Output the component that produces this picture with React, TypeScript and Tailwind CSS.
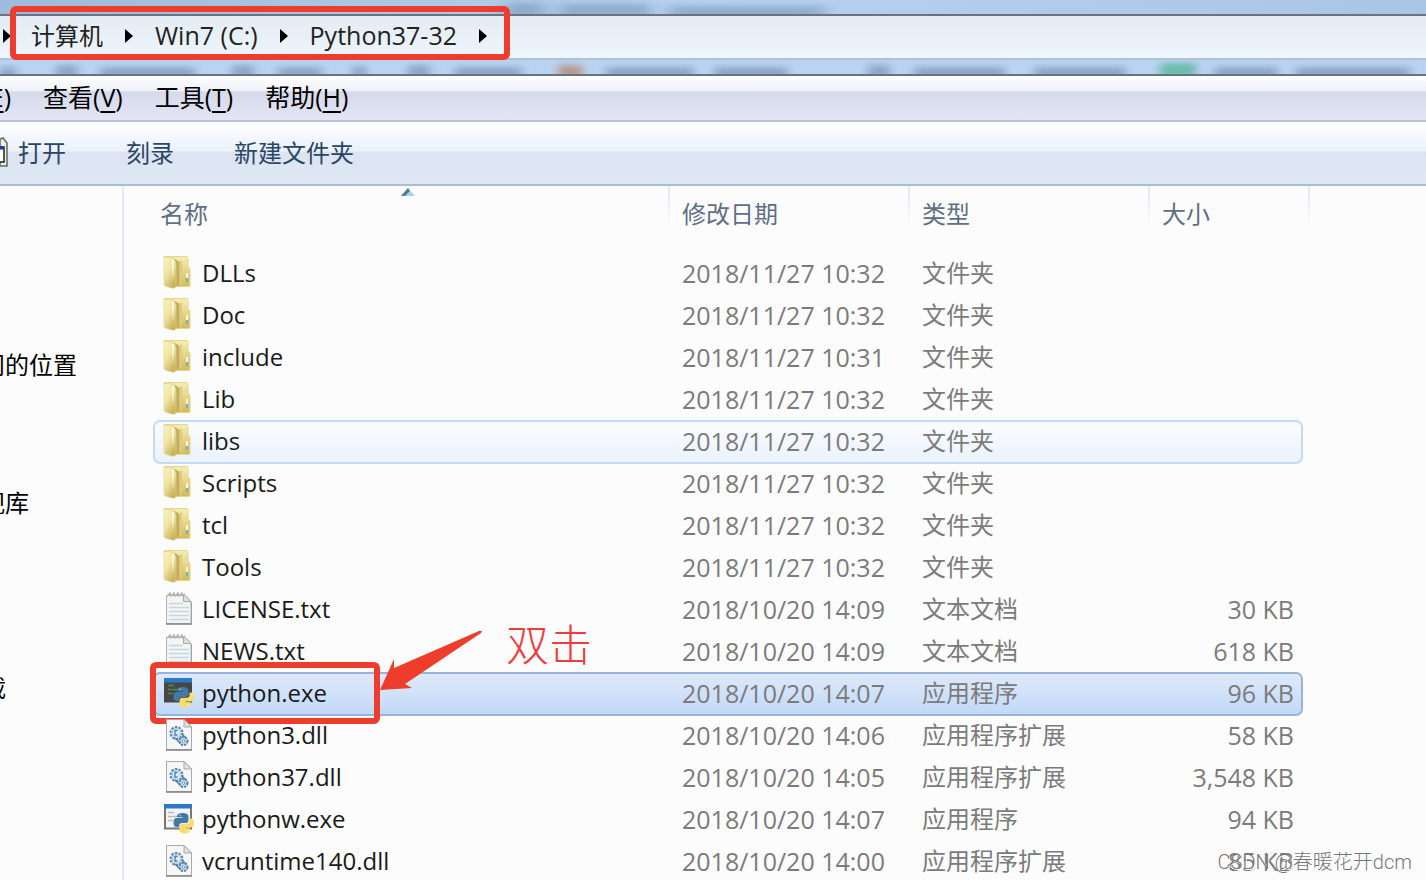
import { useState } from "react";

type Kind = "folder" | "text" | "console" | "window" | "dll";

interface FileRow {
    name: string;
    date: string;
    type: string;
    size: string;
    kind: Kind;
}

const files: FileRow[] = [
    { name: "DLLs", date: "2018/11/27 10:32", type: "文件夹", size: "", kind: "folder" },
    { name: "Doc", date: "2018/11/27 10:32", type: "文件夹", size: "", kind: "folder" },
    { name: "include", date: "2018/11/27 10:31", type: "文件夹", size: "", kind: "folder" },
    { name: "Lib", date: "2018/11/27 10:32", type: "文件夹", size: "", kind: "folder" },
    { name: "libs", date: "2018/11/27 10:32", type: "文件夹", size: "", kind: "folder" },
    { name: "Scripts", date: "2018/11/27 10:32", type: "文件夹", size: "", kind: "folder" },
    { name: "tcl", date: "2018/11/27 10:32", type: "文件夹", size: "", kind: "folder" },
    { name: "Tools", date: "2018/11/27 10:32", type: "文件夹", size: "", kind: "folder" },
    { name: "LICENSE.txt", date: "2018/10/20 14:09", type: "文本文档", size: "30 KB", kind: "text" },
    { name: "NEWS.txt", date: "2018/10/20 14:09", type: "文本文档", size: "618 KB", kind: "text" },
    { name: "python.exe", date: "2018/10/20 14:07", type: "应用程序", size: "96 KB", kind: "console" },
    { name: "python3.dll", date: "2018/10/20 14:06", type: "应用程序扩展", size: "58 KB", kind: "dll" },
    { name: "python37.dll", date: "2018/10/20 14:05", type: "应用程序扩展", size: "3,548 KB", kind: "dll" },
    { name: "pythonw.exe", date: "2018/10/20 14:07", type: "应用程序", size: "94 KB", kind: "window" },
    { name: "vcruntime140.dll", date: "2018/10/20 14:00", type: "应用程序扩展", size: "85 KB", kind: "dll" },
];

const columns = ["名称", "修改日期", "类型", "大小"];

function FolderIcon() {
    return (
        <svg viewBox="0 0 32 34" className="h-[34px] w-8 shrink-0" aria-hidden="true">
            <defs>
                <linearGradient id="folderBack" x1="0" y1="0" x2="0" y2="1">
                    <stop offset="0" stopColor="#f5eeb6" />
                    <stop offset="1" stopColor="#d6b955" />
                </linearGradient>
                <linearGradient id="folderFront" x1="0" y1="0" x2="0.6" y2="1">
                    <stop offset="0" stopColor="#faf4bd" />
                    <stop offset="0.5" stopColor="#efe5a4" />
                    <stop offset="1" stopColor="#cbb35b" />
                </linearGradient>
                <linearGradient id="folderShine" x1="0" y1="0" x2="0" y2="1">
                    <stop offset="0" stopColor="#fffef2" />
                    <stop offset="1" stopColor="#fffef2" stopOpacity="0" />
                </linearGradient>
            </defs>
            <path d="M2 1.5Q2 0.5 3 0.5H24.5Q26 0.5 26 2V11L28 13V29Q28 30.5 26 30.5H12V2H2Z" fill="url(#folderBack)" stroke="#e6d58c" />
            <path d="M13 3L17.5 6V28L14 31H12Z" fill="#c3ac5c" />
            <path d="M17.5 6L20 4V29L17.5 28Z" fill="#dccb80" />
            <path d="M2 1.5H6Q11 2 12.5 4L14 7V31L11.5 32.5L3 30Q2 29.5 2 28Z" fill="url(#folderFront)" stroke="#e2d389" strokeWidth="0.6" />
            <path d="M10 4H12V24H10Z" fill="url(#folderShine)" />
            <path d="M25 17V22" stroke="#f3f6ea" strokeWidth="2" />
            <path d="M25 22V26" stroke="#74b5b6" strokeWidth="2.4" />
        </svg>
    );
}

function TextIcon() {
    return (
        <svg viewBox="0 0 32 34" className="h-[34px] w-8 shrink-0" aria-hidden="true">
            <path d="M4.5 3.5H22L29 10V31.5H4.5Z" fill="#f3f4f4" stroke="#b3b3b3" />
            <path d="M4 32H30" stroke="#858585" strokeWidth="1.5" />
            <path d="M29.5 10V31" stroke="#a1a1a1" />
            <path d="M5 4L8 0.8L9 4L12 0.8L13 4L16 0.8L17 4L20 0.8L21 4L23 1.5" fill="none" stroke="#b4b4b4" strokeWidth="1.2" />
            <path d="M21.5 3V9.5H29L25 5Z" fill="#ddd" stroke="#a9a9a9" />
            <path d="M7 11.5H21M7 15.5H27M7 19.5H27M7 23.5H27M7 27.5H27" stroke="#c5d6e3" strokeWidth="1.6" />
        </svg>
    );
}

function PythonLogo() {
    return (
        <>
            <path d="M15 14.5Q15 11 20.5 11Q26.5 11 26.5 14.5V18Q26.5 21 23.5 21H20Q17 21 17 25H14.5Q11.5 25 11.5 20.5Q11.5 16 14.5 16H20.5V15.2H15Z" fill="#4379a8" />
            <path d="M27.5 16.5H29Q32 16.5 32 21Q32 25.5 29 25.5H23.5V26.3H28V28Q28 31.5 23 31.5Q17.5 31.5 17.5 28V25Q17.5 21.8 20.5 21.8H24.5Q27.5 21.8 27.5 19Z" fill="#f9dc6b" />
            <circle cx="18" cy="13.2" r="0.8" fill="#a9c6dc" />
            <circle cx="25.3" cy="29" r="0.8" fill="#fff3b8" />
        </>
    );
}

function ConsoleIcon() {
    return (
        <svg viewBox="0 0 32 34" className="h-[34px] w-8 shrink-0" aria-hidden="true">
            <path d="M2 4H30V26.5H2Z" fill="#474747" />
            <path d="M2 2H30V6.5H2Z" fill="#2e78c8" />
            <path d="M6 9.5H12M6 13.5H9M10 13.5H15M6 17.5H11" stroke="#4c8f40" strokeWidth="1.6" />
            <PythonLogo />
        </svg>
    );
}

function WindowIcon() {
    return (
        <svg viewBox="0 0 32 34" className="h-[34px] w-8 shrink-0" aria-hidden="true">
            <path d="M3 4H29V26.5H3Z" fill="#f4f4f4" stroke="#777" strokeWidth="2" />
            <path d="M2 2H30V6.5H2Z" fill="#2e78c8" />
            <path d="M6 10.5H12M6 14.5H16M6 18.5H11" stroke="#bcbcbc" strokeWidth="1.5" />
            <PythonLogo />
        </svg>
    );
}

function DllIcon() {
    return (
        <svg viewBox="0 0 32 34" className="h-[34px] w-8 shrink-0" aria-hidden="true">
            <path d="M4.5 1.5H22L29.5 9V31.5H4.5Z" fill="#f6f6f6" stroke="#a9a9a9" />
            <path d="M4 32H30" stroke="#858585" strokeWidth="1.5" />
            <path d="M22 1.5V9H29.5Z" fill="#e1e1e1" stroke="#a9a9a9" />
            <path d="M17 12L24 20L18 24L11 20Z" fill="#c4dbf0" />
            <circle cx="14.5" cy="15" r="6" fill="#dbeaf7" stroke="#5580ab" strokeWidth="2" strokeDasharray="2.4 1.3" />
            <circle cx="14.5" cy="15" r="4.2" fill="#dfedf8" stroke="#a5c2de" />
            <path d="M15.5 12.5H13V17H15.5" fill="none" stroke="#5580ab" strokeWidth="1.4" />
            <circle cx="21.5" cy="23" r="4" fill="#cfe2f3" stroke="#5580ab" strokeWidth="2" strokeDasharray="2.2 1.1" />
            <circle cx="21.5" cy="23" r="1.4" fill="#eef5fb" stroke="#6d95be" />
            <path d="M13 20L18.5 25.5M20 16L24 20" stroke="#5580ab" strokeWidth="1.4" />
        </svg>
    );
}

function FileIcon({ kind }: { kind: Kind }) {
    if (kind === "folder") return <FolderIcon />;
    if (kind === "text") return <TextIcon />;
    if (kind === "console") return <ConsoleIcon />;
    if (kind === "window") return <WindowIcon />;
    return <DllIcon />;
}

function CrumbArrow() {
    return (
        <svg viewBox="0 0 10 14" className="h-[14px] w-[10px] shrink-0" aria-hidden="true">
            <path d="M1 0L9 7L1 14Z" fill="#000" />
        </svg>
    );
}

// Blurred desktop content showing through the glass frame
function GlassSmudges() {
    return (
        <svg viewBox="0 0 1426 14" preserveAspectRatio="none" className="h-full w-full" aria-hidden="true">
            <defs>
                <filter id="smudge" x="-20%" y="-100%" width="140%" height="300%">
                    <feGaussianBlur stdDeviation="5 3" />
                </filter>
            </defs>
            <g filter="url(#smudge)" fill="#7d99b9" opacity="0.75">
                <path d="M0 7H16V19H0ZM56 5H78V19H56ZM100 7H195V19H100ZM232 5H254V19H232ZM278 7H322V19H278ZM352 6H366V19H352ZM408 5H430V19H408ZM455 7H522V19H455ZM606 7H694V19H606ZM714 7H788V19H714ZM868 5H890V19H868ZM914 7H1005V19H914ZM1034 7H1126V19H1034ZM1215 7H1278V19H1215ZM1296 7H1410V19H1296Z" />
                <path d="M558 5H582V19H558Z" fill="#b58370" />
                <path d="M1160 3H1196V17H1160Z" fill="#4fb594" />
            </g>
        </svg>
    );
}

function HeaderCell({ label, sorted, first, onSort }: { label: string; sorted: boolean; first: boolean; onSort: () => void }) {
    return (
        <th className="relative flex h-[67px] font-normal">
            <button onClick={onSort} className={`w-full pb-[12px] text-left leading-[30px] text-[#5f6f86] ${first ? "pl-[6px]" : "pl-3"}`}>
                {label}
            </button>
            {sorted && (
                <svg viewBox="0 0 14 8" className="absolute top-[2px] left-[247px] h-2 w-[14px]" aria-hidden="true">
                    <path d="M0 8L7 0L14 8Z" fill="#a9d3e8" />
                    <path d="M0 8L7 0L9 3L4 8Z" fill="#4f7c96" />
                </svg>
            )}
            <span className="h-11 w-[2px] shrink-0 bg-linear-to-b from-[#dde8f6] to-[#fcfcfc]" />
        </th>
    );
}

export default function App() {
    const [selected, setSelected] = useState("python.exe");
    const [sortBy, setSortBy] = useState("名称");

    return (
        <div className="relative flex h-screen flex-col overflow-hidden bg-[#fcfcfc] font-['Open_Sans','Noto_Sans_CJK_SC',sans-serif] text-[24px] text-black">
            {/* Window frame */}
            <div className="h-[14px] shrink-0 bg-linear-to-r from-[#9dbbdc] via-[#b7d2f0] to-[#a9c5e5]">
                <svg viewBox="0 0 1426 14" preserveAspectRatio="none" className="h-full w-full" aria-hidden="true">
                    <defs>
                        <filter id="titleBlur" x="-20%" y="-100%" width="140%" height="300%">
                            <feGaussianBlur stdDeviation="8 3" />
                        </filter>
                    </defs>
                    <path d="M505 3H545V18H505ZM560 4H650V18H560ZM670 6H825V18H670Z" fill="#7f9dbd" opacity="0.7" filter="url(#titleBlur)" />
                </svg>
            </div>

            {/* Address bar */}
            <nav aria-label="地址" className="relative flex h-[46px] shrink-0 items-center border-t-2 border-b-2 border-t-[#6a737f] border-b-[#b4c0cf] bg-linear-to-b from-[#e4ebf2] to-[#eef6fd] pb-[2px] text-[#222]">
                <div className="flex w-[31px] shrink-0 items-center pl-[2px]">
                    <CrumbArrow />
                </div>
                <div className="flex items-center gap-[21px]">
                    <button>计算机</button>
                    <CrumbArrow />
                    <button className="text-[25px]">Win7 (C:)</button>
                    <CrumbArrow />
                    <button className="text-[25px]">Python37-32</button>
                    <CrumbArrow />
                </div>
                <div className="pointer-events-none absolute -top-[10px] left-[10px] h-[54px] w-[500px] rounded-md border-[6px] border-[#ee3d2c]" />
            </nav>
            <div className="h-[14px] shrink-0 bg-[#b9d4f3]">
                <GlassSmudges />
            </div>

            {/* Menu bar */}
            <div className="flex h-12 shrink-0 items-center gap-8 border-t-2 border-b-2 border-t-[#6a737f] border-b-[#bcc2d3] bg-[linear-gradient(#ffffff_0%,#eff0f7_34%,#d5daeb_36%,#e3e5f3_100%)] text-[25px]">
                <div className="flex w-[11px] justify-end overflow-hidden">
                    <button className="shrink-0">编辑(<u className="underline-offset-4">E</u>)</button>
                </div>
                <button>查看(<u className="underline-offset-4">V</u>)</button>
                <button>工具(<u className="underline-offset-4">T</u>)</button>
                <button>帮助(<u className="underline-offset-4">H</u>)</button>
            </div>

            {/* Toolbar */}
            <div className="flex h-16 shrink-0 items-center border-b-2 border-b-[#adbbd0] bg-[linear-gradient(#ffffff_0%,#e9f1fb_47%,#dde4f1_49%,#dee8f5_100%)] text-[#2b4568]">
                <svg viewBox="0 0 9 32" className="h-8 w-[9px] shrink-0" aria-hidden="true">
                    <path d="M0 2L3 1L7 6V29H0Z" fill="#eeeee4" stroke="#666" strokeWidth="1.5" />
                    <path d="M0 10H4V25H0" fill="#fff" stroke="#222" strokeWidth="1.5" />
                    <path d="M0 11H4" stroke="#1a37b0" strokeWidth="3" />
                </svg>
                <div className="flex gap-[60px] pl-[9px]">
                    <button>打开</button>
                    <button>刻录</button>
                    <button>新建文件夹</button>
                </div>
            </div>

            <div className="flex min-h-0 flex-1">
                {/* Navigation pane */}
                <aside className="flex w-[124px] shrink-0 flex-col border-r-2 border-r-[#dfe9f8]">
                    <div className="mt-[159px] flex w-[77px] justify-end overflow-hidden">
                        <a href="#recent" className="shrink-0 leading-[40px]">最近访问的位置</a>
                    </div>
                    <div className="mt-[98px] flex w-[29px] justify-end overflow-hidden">
                        <a href="#videos" className="shrink-0 leading-[40px]">暴风影视库</a>
                    </div>
                    <div className="mt-[145px] flex w-[6px] justify-end overflow-hidden">
                        <a href="#downloads" className="shrink-0 leading-[40px]">迅雷下载</a>
                    </div>
                </aside>

                {/* File list */}
                <main className="flex-1 pl-[30px]">
                    <table className="block">
                        <thead className="block">
                            <tr className="grid grid-cols-[516px_240px_240px_160px]">
                                {columns.map((label, i) => (
                                    <HeaderCell key={label} label={label} first={i === 0} sorted={label === sortBy} onSort={() => setSortBy(label)} />
                                ))}
                            </tr>
                        </thead>
                        <tbody className="block">
                            {files.map((file) => (
                                <tr
                                    key={file.name}
                                    onClick={() => setSelected(file.name)}
                                    className={`relative grid h-[42px] w-[1148px] grid-cols-[516px_240px_240px_1fr] leading-[40px] text-[#7b7b7b] ${
                                        file.name === selected
                                            ? "rounded-md bg-linear-to-b from-[#dfeafa] to-[#c1d8f8] outline-2 -outline-offset-1 outline-[#98b4da]"
                                            : file.name === "libs"
                                              ? "rounded-md bg-linear-to-b from-[#fbfcfe] to-[#eaf2fc] outline-2 -outline-offset-1 outline-[#c5daf6]"
                                              : ""
                                    }`}
                                >
                                    <td className="flex gap-2 pt-[3px] pl-2 leading-[34px] text-[#1a1a1a]">
                                        <FileIcon kind={file.kind} />
                                        {file.name}
                                    </td>
                                    <td className="pl-3 text-[25px]">{file.date}</td>
                                    <td className="pl-3">{file.type}</td>
                                    <td className="pr-2 text-right text-[25px]">{file.size}</td>
                                    {file.name === "python.exe" && (
                                        <td className="pointer-events-none absolute -top-[43px] -left-1 h-[94px] w-[460px]">
                                            <div className="absolute bottom-0 left-0 h-[62px] w-[230px] rounded-md border-[6px] border-[#ee3d2c]" />
                                            <svg viewBox="0 0 104 64" className="absolute top-0 left-[229px] h-16 w-[104px]" aria-hidden="true">
                                                <path d="M1 60L15 29V38L100 1Q104 0 102 3L26 54L33 58Z" fill="#ee3d2c" />
                                            </svg>
                                            <span className="absolute top-0 left-[356px] text-[43px] leading-[30px] font-light text-[#ee3d3c]">双击</span>
                                        </td>
                                    )}
                                </tr>
                            ))}
                        </tbody>
                    </table>
                </main>
            </div>

            <span className="absolute right-[14px] bottom-1 font-[Roboto,'Noto_Sans_CJK_SC',sans-serif] text-[20px] leading-[28px] font-light text-[#777] [text-shadow:1px_1px_0_#fff]">
                CSDN @春暖花开dcm
            </span>
        </div>
    );
}
